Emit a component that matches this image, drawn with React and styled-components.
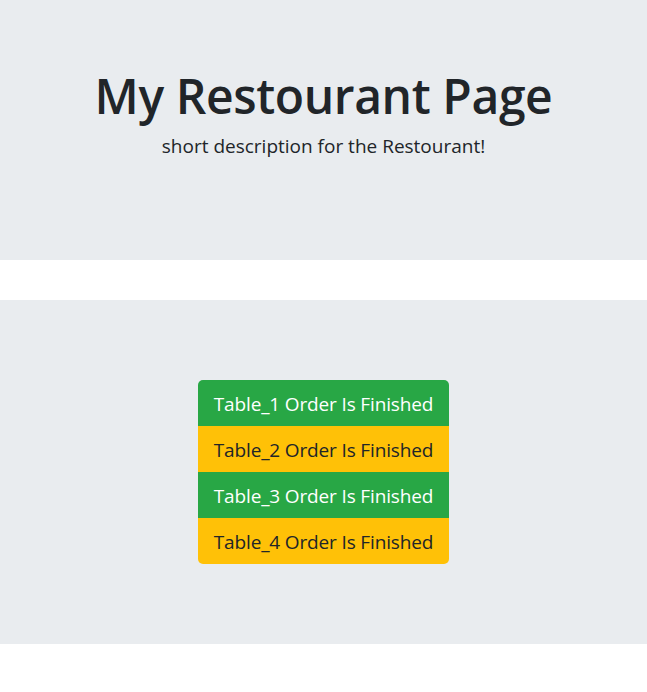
import React from 'react';
import styled, { createGlobalStyle } from 'styled-components';

const GlobalStyle = createGlobalStyle`
	body {
		margin: 0;
		background: #fff;
		color: #212529;
		font-family: "Open Sans", "Noto Sans", sans-serif;
	}
`;

const Jumbotron = styled.section`
	background-color: #e9ecef;
	box-sizing: border-box;
	height: ${(p) => p.height}px;
	margin-bottom: 40px;
	display: flex;
	flex-direction: column;
	align-items: center;
	padding: ${(p) => p.padTop}px 32px 0;
`;

const Title = styled.h1`
	margin: 0;
	font-size: 48px;
	font-weight: 600;
	line-height: 64px;
	letter-spacing: -0.4px;
	color: #212529;
`;

const Lead = styled.p`
	margin: 3px 0 0;
	font-size: 19px;
	line-height: 30px;
	color: #212529;
`;

const ButtonGroup = styled.div`
	display: flex;
	flex-direction: column;
	border-radius: 5px;
	overflow: hidden;
`;

const OrderButton = styled.button`
	border: none;
	margin: 0;
	height: 46px;
	padding: 2px 16px 0;
	font-family: inherit;
	font-size: 19px;
	letter-spacing: -0.15px;
	line-height: 30px;
	background-color: ${(p) => (p.variant === 'success' ? '#28a745' : '#ffc107')};
	color: ${(p) => (p.variant === 'success' ? '#fff' : '#212529')};
	cursor: pointer;
`;

const tables = [1, 2, 3, 4];

function App() {
	return (
		<>
			<GlobalStyle />
			<Jumbotron height={260} padTop={64}>
				<Title>My Restourant Page</Title>
				<Lead>short description for the Restourant!</Lead>
			</Jumbotron>
			<Jumbotron height={344} padTop={80}>
				<ButtonGroup>
					{tables.map((n) => (
						<OrderButton key={n} variant={n % 2 ? 'success' : 'warning'}>
							Table_{n} Order Is Finished
						</OrderButton>
					))}
				</ButtonGroup>
			</Jumbotron>
		</>
	);
}

export default App;
